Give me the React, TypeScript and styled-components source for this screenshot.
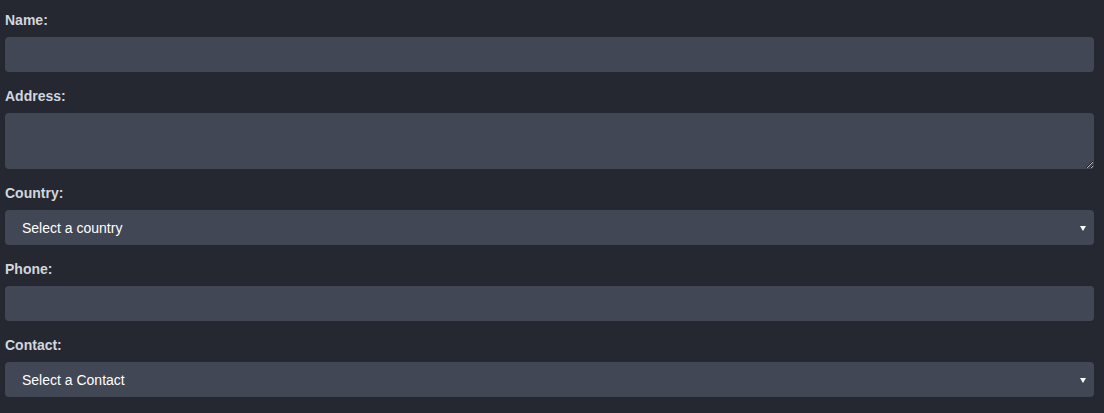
import { createGlobalStyle, styled } from 'styled-components';

const GlobalStyle = createGlobalStyle`
  html, body {
    margin: 0;
    padding: 0;
    background-color: #252830;
  }
  body {
    font-family: 'Liberation Sans', Arial, sans-serif;
  }
`;

type FieldKind = 'input' | 'textarea' | 'select';

type FieldProps = {
  id: string;
  label: string;
  kind: FieldKind;
  placeholder?: string;
};

const fields: FieldProps[] = [
  { id: 'name', label: 'Name:', kind: 'input' },
  { id: 'address', label: 'Address:', kind: 'textarea' },
  { id: 'country', label: 'Country:', kind: 'select', placeholder: 'Select a country' },
  { id: 'phone', label: 'Phone:', kind: 'input' },
  { id: 'contact', label: 'Contact:', kind: 'select', placeholder: 'Select a Contact' },
];

function Field({ id, label, kind, placeholder }: FieldProps) {
  return (
    <Group>
      <Label htmlFor={id}>{label}</Label>
      {kind === 'input' && <TextInput id={id} type="text" />}
      {kind === 'textarea' && <TextArea id={id} />}
      {kind === 'select' && (
        <SelectWrap>
          <Select id={id} defaultValue="">
            <option value="">{placeholder}</option>
          </Select>
        </SelectWrap>
      )}
    </Group>
  );
}

function App() {
  return (
    <>
      <GlobalStyle />
      <Form onSubmit={(e) => e.preventDefault()}>
        {fields.map((field) => (
          <Field key={field.id} {...field} />
        ))}
      </Form>
    </>
  );
}

const Form = styled.form`
  display: flex;
  flex-direction: column;
  gap: 16px;
  padding: 12px 10px 0 5px;
`;

const Group = styled.div`
  display: flex;
  flex-direction: column;
  gap: 9px;
`;

const Label = styled.label`
  display: block;
  font-size: 14px;
  line-height: 16px;
  font-weight: 700;
  color: #d2d6de;
`;

const controlBase = `
  box-sizing: border-box;
  width: 100%;
  margin: 0;
  border: 0;
  border-radius: 4px;
  background-color: #414755;
  color: #ffffff;
  font-family: 'Liberation Sans', Arial, sans-serif;
  font-size: 14px;
  outline: none;
`;

const TextInput = styled.input`
  ${controlBase}
  height: 35px;
  padding: 0 17px;
`;

const TextArea = styled.textarea`
  ${controlBase}
  display: block;
  height: 56px;
  padding: 8px 17px;
  color-scheme: dark;
  resize: vertical;
`;

const SelectWrap = styled.div`
  position: relative;

  &::after {
    content: '';
    position: absolute;
    right: 8px;
    top: 50%;
    margin-top: -2px;
    border-left: 3px solid transparent;
    border-right: 3px solid transparent;
    border-top: 5px solid #ffffff;
    pointer-events: none;
  }
`;

const Select = styled.select`
  ${controlBase}
  display: block;
  height: 35px;
  padding: 0 17px;
  appearance: none;
  -webkit-appearance: none;
`;

export default App;
